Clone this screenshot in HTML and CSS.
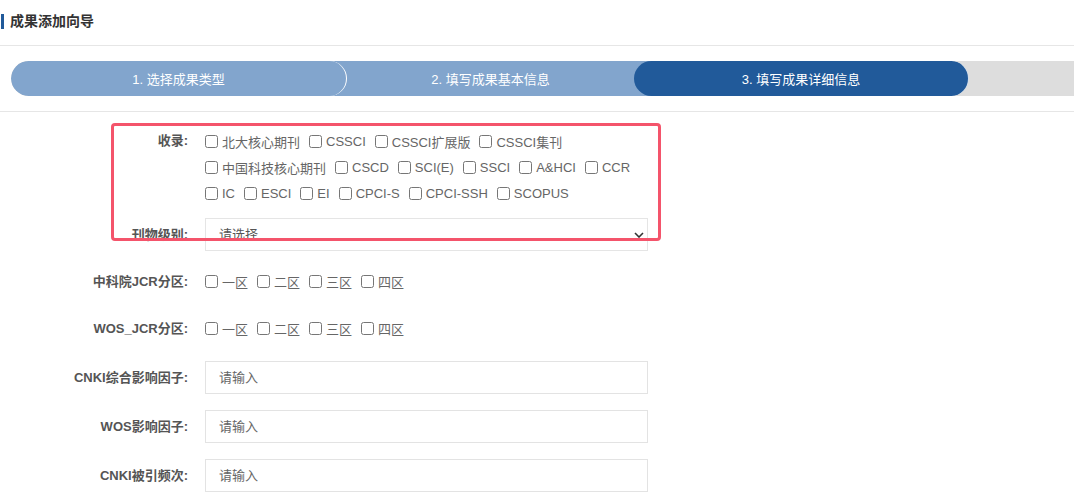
FILE: index.html
```html
<!DOCTYPE html>
<html lang="zh-CN">
<head>
<meta charset="utf-8">
<title>成果添加向导</title>
<link rel="stylesheet" href="styles.css">
</head>
<body>
<div class="header"><h1 class="title">成果添加向导</h1></div>
<div class="steps-wrap">
  <div class="steps">
    <div class="step step1">1. 选择成果类型</div>
    <div class="step step2">2. 填写成果基本信息</div>
    <div class="step step3">3. 填写成果详细信息</div>
  </div>
</div>
<form class="form">
  <div class="row row-top">
    <label class="label">收录:</label>
    <div class="checks">
      <label class="check"><input type="checkbox">北大核心期刊</label>
      <label class="check"><input type="checkbox">CSSCI</label>
      <label class="check"><input type="checkbox">CSSCI扩展版</label>
      <label class="check"><input type="checkbox">CSSCI集刊</label>
      <label class="check"><input type="checkbox">中国科技核心期刊</label>
      <label class="check"><input type="checkbox">CSCD</label>
      <label class="check"><input type="checkbox">SCI(E)</label>
      <label class="check"><input type="checkbox">SSCI</label>
      <label class="check"><input type="checkbox">A&amp;HCI</label>
      <label class="check"><input type="checkbox">CCR</label>
      <label class="check"><input type="checkbox">IC</label>
      <label class="check"><input type="checkbox">ESCI</label>
      <label class="check"><input type="checkbox">EI</label>
      <label class="check"><input type="checkbox">CPCI-S</label>
      <label class="check"><input type="checkbox">CPCI-SSH</label>
      <label class="check"><input type="checkbox">SCOPUS</label>
    </div>
  </div>
  <div class="row">
    <label class="label">刊物级别:</label>
    <div class="select-wrap">
      <select class="select"><option>请选择</option></select>
      <svg class="chevron" width="10" height="6" viewBox="0 0 10 6"><path d="M1 1l4 4 4-4" fill="none" stroke="#333" stroke-width="1.6"/></svg>
    </div>
  </div>
  <div class="row">
    <label class="label">中科院JCR分区:</label>
    <div class="checks">
      <label class="check"><input type="checkbox">一区</label>
      <label class="check"><input type="checkbox">二区</label>
      <label class="check"><input type="checkbox">三区</label>
      <label class="check"><input type="checkbox">四区</label>
    </div>
  </div>
  <div class="row row-gap">
    <label class="label">WOS_JCR分区:</label>
    <div class="checks">
      <label class="check"><input type="checkbox">一区</label>
      <label class="check"><input type="checkbox">二区</label>
      <label class="check"><input type="checkbox">三区</label>
      <label class="check"><input type="checkbox">四区</label>
    </div>
  </div>
  <div class="row row-gap">
    <label class="label">CNKI综合影响因子:</label>
    <input class="input" type="text" placeholder="请输入">
  </div>
  <div class="row row-gap">
    <label class="label">WOS影响因子:</label>
    <input class="input" type="text" placeholder="请输入">
  </div>
  <div class="row row-gap">
    <label class="label">CNKI被引频次:</label>
    <input class="input" type="text" placeholder="请输入">
  </div>
</form>
<div class="highlight"></div>
</body>
</html>
```
FILE: styles.css
```css
* { box-sizing: border-box; }
html, body { margin: 0; padding: 0; background: #fff; }
body {
  font-family: "Liberation Sans", "Noto Sans CJK SC", sans-serif;
  font-size: 13px;
  color: #555;
  width: 1074px;
  height: 502px;
  overflow: hidden;
}
.header {
  height: 46px;
  display: flex;
  align-items: center;
  border-bottom: 1px solid #e6e6e6;
  padding-bottom: 3px;
}
.title {
  margin: 0 0 0 1px;
  border-left: 3px solid #215a9a;
  padding-left: 6px;
  font-size: 14px;
  font-weight: bold;
  color: #333;
  line-height: 15px;
}
.steps-wrap {
  padding: 15px 0;
  border-bottom: 1px solid #e6e6e6;
}
.steps {
  display: flex;
  height: 35px;
  margin-left: 11px;
  background: #dddddd;
  border-radius: 18px 0 0 18px;
  overflow: hidden;
}
.step {
  flex: none;
  display: flex;
  align-items: center;
  justify-content: center;
  color: #fff;
  font-size: 13px;
  height: 35px;
}
.step1 {
  width: 336px;
  background: #82a5cd;
  border-radius: 18px;
  border-right: 1px solid #fff;
  z-index: 2;
}
.step2 {
  width: 323px;
  margin-left: -18px;
  padding: 0 18px;
  background: #82a5cd;
  z-index: 1;
}
.step3 {
  width: 335px;
  margin-left: -18px;
  background: #215a9a;
  border-radius: 18px;
  border-right: 1px solid rgba(255,255,255,0.8);
  z-index: 2;
}
.form {
  padding-top: 16px;
  margin: 0;
}
.row {
  display: flex;
  align-items: center;
  min-height: 33px;
  margin-bottom: 14px;
}
.row-top {
  align-items: flex-start;
  margin-bottom: 12px;
}
.row-gap { margin-bottom: 16px; }
.label {
  flex: none;
  width: 188px;
  margin-right: 17px;
  text-align: right;
  font-weight: bold;
  color: #555;
  line-height: 26px;
}
.checks {
  width: 443px;
  display: flex;
  flex-wrap: wrap;
}
.check {
  display: inline-flex;
  align-items: center;
  height: 26px;
  margin-right: 9px;
  color: #666;
  white-space: nowrap;
}
.check input {
  margin: 0 4px 0 0;
  width: 13px;
  height: 13px;
}
.select-wrap {
  position: relative;
  width: 443px;
  height: 33px;
}
.select {
  appearance: none;
  -webkit-appearance: none;
  width: 443px;
  height: 33px;
  border: 1px solid #e5e5e5;
  border-radius: 0;
  background: #fff;
  padding: 0 13px;
  font: inherit;
  color: #555;
  outline: none;
}
.chevron {
  position: absolute;
  right: 4px;
  top: 14px;
  pointer-events: none;
}
.input {
  width: 443px;
  height: 33px;
  border: 1px solid #e3e3e3;
  padding: 0 13px;
  font: inherit;
  color: #555;
  outline: none;
}
.input::placeholder { color: #666; }
.highlight {
  position: absolute;
  left: 111px;
  top: 123px;
  width: 550px;
  height: 118px;
  border: 3px solid #f4546b;
  border-radius: 4px;
  pointer-events: none;
}
```
